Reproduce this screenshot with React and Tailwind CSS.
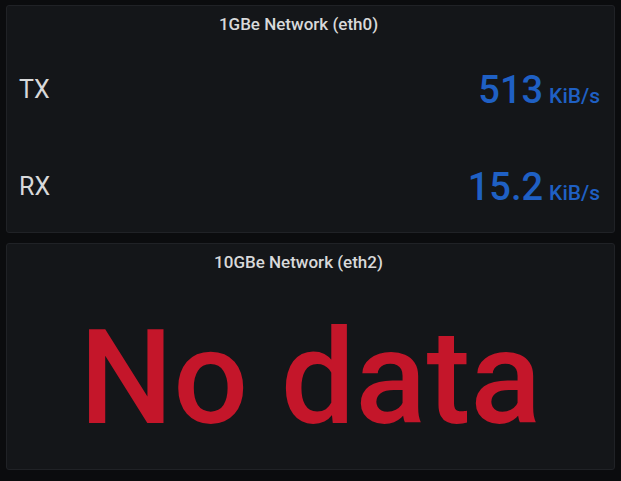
const rows = [
  { label: 'TX', value: '513', unit: 'KiB/s' },
  { label: 'RX', value: '15.2', unit: 'KiB/s' },
];

function Panel({ title, children, className }) {
  return (
    <div className={`flex flex-col rounded-[3px] border border-[#202226] bg-[#141619] ${className}`}>
      <div className="flex h-8 items-center justify-center pr-6 pt-[6px] text-[17px] font-medium text-[#d8d9da]">
        {title}
      </div>
      {children}
    </div>
  );
}

export default function App() {
  return (
    <div
      className="flex h-[481px] w-[621px] flex-col gap-[10px] bg-[#0b0c0e] px-[6px] pt-[5px]"
      style={{ fontFamily: 'Roboto, "Liberation Sans", sans-serif' }}
    >
      <Panel title="1GBe Network (eth0)" className="h-[228px]">
        <div className="flex flex-col pl-[12px] pr-[14px] pt-[4px]">
          {rows.map((row) => (
            <div key={row.label} className="flex h-[97px] items-center justify-between">
              <span className="text-[25px] text-[#d8d9da]">{row.label}</span>
              <span className="flex items-baseline gap-[6px] font-medium text-[#1f60c4]">
                <span className="text-[38px] leading-none">{row.value}</span>
                <span className="text-[21px] leading-none">{row.unit}</span>
              </span>
            </div>
          ))}
        </div>
      </Panel>
      <Panel title="10GBe Network (eth2)" className="h-[227px]">
        <div className="flex flex-1 items-center justify-center pt-[10px]">
          <span className="text-[132px] font-medium leading-none text-[#c4162a]">No data</span>
        </div>
      </Panel>
    </div>
  );
}
